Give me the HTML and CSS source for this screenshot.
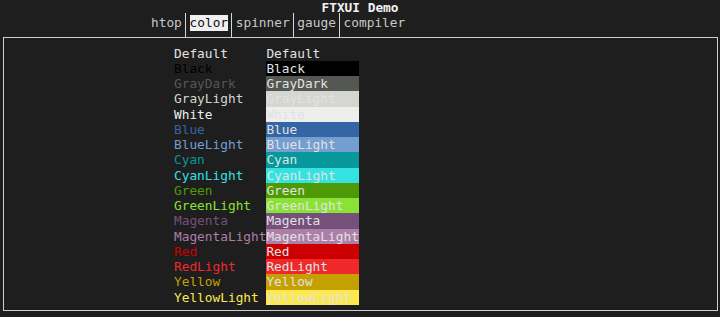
FILE: index.html
```html
<!DOCTYPE html>
<html lang="en">
<head>
    <meta charset="UTF-8">
    <meta name="viewport" content="width=device-width, initial-scale=1.0">
    <title>FTXUI Demo</title>
    <link rel="stylesheet" href="styles.css">
</head>
<body>
    <div class="screen">
        <div class="title">FTXUI Demo</div>

        <div class="tabs">
            <span class="tab">htop</span><span class="sep"></span><span class="tab active">color</span><span class="sep"></span><span class="tab">spinner</span><span class="sep"></span><span class="tab">gauge</span><span class="sep"></span><span class="tab">compiler</span>
        </div>

        <div class="frame">
            <div class="colors">
                <div class="cell">Default</div><div class="cell">Default</div>
                <div class="cell fg-black">Black</div><div class="cell bg-black">Black</div>
                <div class="cell fg-graydark">GrayDark</div><div class="cell bg-graydark">GrayDark</div>
                <div class="cell fg-graylight">GrayLight</div><div class="cell bg-graylight">GrayLight</div>
                <div class="cell fg-white">White</div><div class="cell bg-white">White</div>
                <div class="cell fg-blue">Blue</div><div class="cell bg-blue">Blue</div>
                <div class="cell fg-bluelight">BlueLight</div><div class="cell bg-bluelight">BlueLight</div>
                <div class="cell fg-cyan">Cyan</div><div class="cell bg-cyan">Cyan</div>
                <div class="cell fg-cyanlight">CyanLight</div><div class="cell bg-cyanlight">CyanLight</div>
                <div class="cell fg-green">Green</div><div class="cell bg-green">Green</div>
                <div class="cell fg-greenlight">GreenLight</div><div class="cell bg-greenlight">GreenLight</div>
                <div class="cell fg-magenta">Magenta</div><div class="cell bg-magenta">Magenta</div>
                <div class="cell fg-magentalight">MagentaLight</div><div class="cell bg-magentalight">MagentaLight</div>
                <div class="cell fg-red">Red</div><div class="cell bg-red">Red</div>
                <div class="cell fg-redlight">RedLight</div><div class="cell bg-redlight">RedLight</div>
                <div class="cell fg-yellow">Yellow</div><div class="cell bg-yellow">Yellow</div>
                <div class="cell fg-yellowlight">YellowLight</div><div class="cell bg-yellowlight">YellowLight</div>
            </div>
        </div>
    </div>
</body>
</html>
```

FILE: styles.css
```css
:root{
    --cw: 7.7px;
    --lh: 15.25px;
    --fg: #e2e2e2;
    --bg: #1e1e1e;
}

html, body{
    margin: 0;
    padding: 0;
    background: var(--bg);
}

.screen{
    width: 720px;
    height: 317px;
    overflow: hidden;
    background: var(--bg);
    color: var(--fg);
    font-family: "DejaVu Sans Mono", "Liberation Mono", monospace;
    font-size: 12.8px;
    line-height: var(--lh);
}

.title{
    height: var(--lh);
    text-align: center;
    font-weight: bold;
    color: #f2f2f2;
}

.tabs{
    display: flex;
    align-items: flex-start;
    height: var(--lh);
    padding-left: 151px;
    color: #c8c8c8;
}

.tab{
    white-space: pre;
}

.tab.active{
    background: #f0f0f0;
    color: #111;
}

.sep{
    width: var(--cw);
    height: 24px;
    margin-top: -2px;
    flex: none;
    background: linear-gradient(#d8d8d8, #d8d8d8) no-repeat center / 1px 100%;
}

.frame{
    margin: 6.5px 2px 0 3px;
    height: 274px;
    border: 1.5px solid #cfcfcf;
    box-sizing: border-box;
    padding: 7.5px 0 0 170px;
}

.colors{
    display: grid;
    grid-template-columns: calc(var(--cw) * 12) calc(var(--cw) * 12);
    grid-auto-rows: var(--lh);
}

.cell{
    white-space: pre;
}

.fg-black{ color: #000000; }
.fg-graydark{ color: #555753; }
.fg-graylight{ color: #d3d7cf; }
.fg-white{ color: #eeeeec; }
.fg-blue{ color: #3465a4; }
.fg-bluelight{ color: #729fcf; }
.fg-cyan{ color: #06989a; }
.fg-cyanlight{ color: #34e2e2; }
.fg-green{ color: #4e9a06; }
.fg-greenlight{ color: #8ae234; }
.fg-magenta{ color: #75507b; }
.fg-magentalight{ color: #ad7fa8; }
.fg-red{ color: #cc0000; }
.fg-redlight{ color: #ef2929; }
.fg-yellow{ color: #c4a000; }
.fg-yellowlight{ color: #fce94f; }

.bg-black{ background: #000000; }
.bg-graydark{ background: #555753; }
.bg-graylight{ background: #d3d7cf; }
.bg-white{ background: #eeeeec; }
.bg-blue{ background: #3465a4; }
.bg-bluelight{ background: #729fcf; }
.bg-cyan{ background: #06989a; }
.bg-cyanlight{ background: #34e2e2; }
.bg-green{ background: #4e9a06; }
.bg-greenlight{ background: #8ae234; }
.bg-magenta{ background: #75507b; }
.bg-magentalight{ background: #ad7fa8; }
.bg-red{ background: #cc0000; }
.bg-redlight{ background: #ef2929; }
.bg-yellow{ background: #c4a000; }
.bg-yellowlight{ background: #fce94f; }
```
